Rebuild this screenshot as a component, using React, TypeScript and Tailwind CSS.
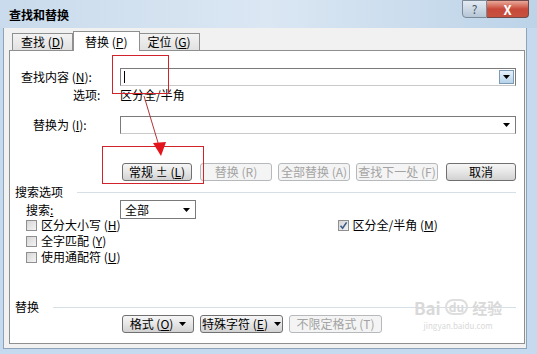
import React from "react";

const font = { fontFamily: '"Noto Sans CJK SC", "Liberation Sans", sans-serif' };

function Btn({ children, w, disabled }: { children: React.ReactNode; w: string; disabled?: boolean }) {
  return (
    <div
      className={`${w} h-[18px] flex items-center justify-center rounded-[3px] border text-[12px] leading-none ${
        disabled
          ? "border-[#b5b9bc] bg-[#f4f4f4] text-[#a3a3a3]"
          : "border-[#707070] bg-gradient-to-b from-[#f6f6f6] via-[#e6e6e6] to-[#d2d2d2] text-black"
      }`}
    >
      {children}
    </div>
  );
}

function Check({ checked }: { checked?: boolean }) {
  return (
    <div className="w-[11px] h-[11px] border border-[#8f8f8f] bg-gradient-to-br from-[#d6d6d6] to-[#f4f4f4] flex items-center justify-center">
      {checked && (
        <svg width="9" height="9" viewBox="0 0 9 9">
          <path d="M1.5 4.8 L3.6 7.2 L7.6 1.4" fill="none" stroke="#3d5c8a" strokeWidth="1.6" />
        </svg>
      )}
    </div>
  );
}

function Arrow() {
  return (
    <svg width="7" height="4" viewBox="0 0 7 4">
      <path d="M0 0 H7 L3.5 4 Z" fill="#000" />
    </svg>
  );
}

export default function App() {
  return (
    <div className="w-[537px] h-[354px] overflow-hidden relative flex flex-col bg-[#c5daee]" style={font}>
      {/* title bar */}
      <div className="h-[28px] flex items-start justify-between bg-gradient-to-r from-[#c9dbec] via-[#dbe7f3] to-[#bcd3e8]">
        <div className="pl-[9px] pt-[9px] text-[12px] font-bold leading-none text-black">查找和替换</div>
        <div className="flex mr-[8px]">
          <div className="w-[25px] h-[18px] rounded-bl-[4px] border border-[#7c8a98] bg-gradient-to-b from-[#e3ebf3] to-[#b6c6d6] flex items-center justify-center text-[12px] leading-none text-[#4a5866]">
            ?
          </div>
          <div className="w-[42px] h-[18px] rounded-br-[4px] border border-l-0 border-[#6f4a48] bg-gradient-to-b from-[#e8a89a] via-[#c8493a] to-[#c6513f] flex items-center justify-center text-[13px] font-bold leading-none text-white">
            X
          </div>
        </div>
      </div>

      {/* body */}
      <div className="flex-1 ml-[3px] mr-[10px] mb-[5px] bg-[#f1f1f1] border-l border-r border-b border-[#8ea3b8] flex flex-col pl-[5px] pt-[2px] pb-[4px]">
        {/* tabs */}
        <div className="flex items-end h-[20px] pl-[3px] text-[12px] leading-none">
          <div className="h-[17px] px-[8px] flex items-center border border-b-0 border-[#8e8f8f] bg-gradient-to-b from-[#f3f3f3] to-[#e1e1e1]">
            查找 (<u>D</u>)
          </div>
          <div className="h-[20px] px-[11px] -mb-px flex items-center border border-b-0 border-[#8e8f8f] bg-white relative z-10">
            替换 (<u>P</u>)
          </div>
          <div className="h-[17px] px-[8px] flex items-center border border-b-0 border-l-0 border-[#8e8f8f] bg-gradient-to-b from-[#f3f3f3] to-[#e1e1e1]">
            定位 (<u>G</u>)
          </div>
        </div>

        {/* panel */}
        <div className="flex-1 mr-[1px] border border-[#8e8f8f] bg-white relative text-[12px] leading-none text-black">
          <div className="flex flex-col pt-[17px] pr-[8px]">
            <div className="flex items-center h-[18px]">
              <div className="w-[110px] pl-[11px]">
                查找内容 (<u>N</u>):
              </div>
              <div className="flex-1 h-[18px] border border-[#7a7a7a] border-b-[#c9c9c9] flex items-center justify-between pl-[3px] pr-px">
                <div className="w-px h-[12px] bg-black" />
                <div className="w-[15px] h-[14px] border border-[#7d9ab5] bg-gradient-to-b from-[#e6f1fa] to-[#b7d3ea] flex items-center justify-center">
                  <Arrow />
                </div>
              </div>
            </div>
            <div className="flex items-center h-[16px] mt-px">
              <div className="w-[110px] pl-[63px]">选项:</div>
              <div>区分全/半角</div>
            </div>
            <div className="flex items-center h-[18px] mt-[13px]">
              <div className="w-[110px] pl-[23px]">
                替换为 (<u>I</u>):
              </div>
              <div className="flex-1 h-[18px] border border-[#7a7a7a] border-b-[#c9c9c9] flex items-center justify-end pr-[5px]">
                <Arrow />
              </div>
            </div>

            {/* action buttons */}
            <div className="flex items-center gap-[6px] h-[18px] mt-[29px] pl-[112px]">
              <Btn w="w-[71px]">
                常规 ± (<u>L</u>)
              </Btn>
              <div className="ml-[2px]">
                <Btn w="w-[72px]" disabled>
                  替换 (R)
                </Btn>
              </div>
              <Btn w="w-[73px]" disabled>
                全部替换 (A)
              </Btn>
              <Btn w="w-[83px]" disabled>
                查找下一处 (F)
              </Btn>
              <div className="ml-[2px]">
                <Btn w="w-[70px]">取消</Btn>
              </div>
            </div>

            {/* search options */}
            <div className="flex items-center h-[14px] mt-[4px] pl-[5px]">
              <span>搜索选项</span>
              <div className="flex-1 ml-[14px] h-px bg-[#d5dfe5]" />
            </div>
            <div className="flex items-center h-[19px] mt-px pl-[16px]">
              <div className="w-[94px]">
                搜索<u>:</u>
              </div>
              <div className="w-[76px] h-[19px] border border-[#7a7a7a] flex items-center justify-between pl-[4px] pr-[5px]">
                <span>全部</span>
                <Arrow />
              </div>
            </div>
            <div className="flex items-center h-[16px] -mt-[2px] pl-[16px]">
              <Check />
              <span className="ml-[4px]">
                区分大小写 (<u>H</u>)
              </span>
              <div className="ml-[217px] flex items-center">
                <Check checked />
                <span className="ml-[4px]">
                  区分全/半角 (<u>M</u>)
                </span>
              </div>
            </div>
            <div className="flex items-center h-[16px] pl-[16px]">
              <Check />
              <span className="ml-[4px]">
                全字匹配 (<u>Y</u>)
              </span>
            </div>
            <div className="flex items-center h-[16px] pl-[16px]">
              <Check />
              <span className="ml-[4px]">
                使用通配符 (<u>U</u>)
              </span>
            </div>

            {/* replace */}
            <div className="flex items-center h-[14px] mt-[35px] pl-[5px]">
              <span>替换</span>
              <div className="flex-1 ml-[14px] h-px bg-[#d5dfe5]" />
            </div>
            <div className="flex items-center gap-[6px] h-[18px] mt-[1px] pl-[112px]">
              <Btn w="w-[72px]">
                <span className="flex items-center gap-[6px]">
                  <span>
                    格式 (<u>O</u>)
                  </span>
                  <Arrow />
                </span>
              </Btn>
              <Btn w="w-[83px]">
                <span className="flex items-center gap-[6px]">
                  <span>
                    特殊字符 (<u>E</u>)
                  </span>
                  <Arrow />
                </span>
              </Btn>
              <Btn w="w-[93px]" disabled>
                不限定格式 (T)
              </Btn>
            </div>
          </div>

          {/* baidu watermark */}
          <div className="absolute left-[404px] top-[246px] flex flex-col items-center text-[#d9d9d9] leading-none">
            <div className="flex items-center gap-[4px] h-[20px]">
              <span className="text-[17px] font-bold">Bai</span>
              <span className="text-[12px] font-bold rounded-full border-2 border-[#dedede] px-[2px]">du</span>
              <span className="text-[15px] font-bold">经验</span>
            </div>
            <span className="text-[8px] mt-[5px]">jingyan.baidu.com</span>
          </div>
        </div>
      </div>

      {/* red annotations */}
      <div className="absolute left-[112px] top-[55px] w-[57px] h-[39px] border border-[#d2232a]" />
      <div className="absolute left-[102px] top-[146px] w-[102px] h-[38px] border border-[#d2232a]" />
      <svg className="absolute left-0 top-0" width="537" height="354">
        <line x1="144" y1="96" x2="159" y2="146" stroke="#b3333a" strokeWidth="1" />
        <path d="M153 143 L166 142 L161 156 Z" fill="#e3141c" />
      </svg>
    </div>
  );
}
